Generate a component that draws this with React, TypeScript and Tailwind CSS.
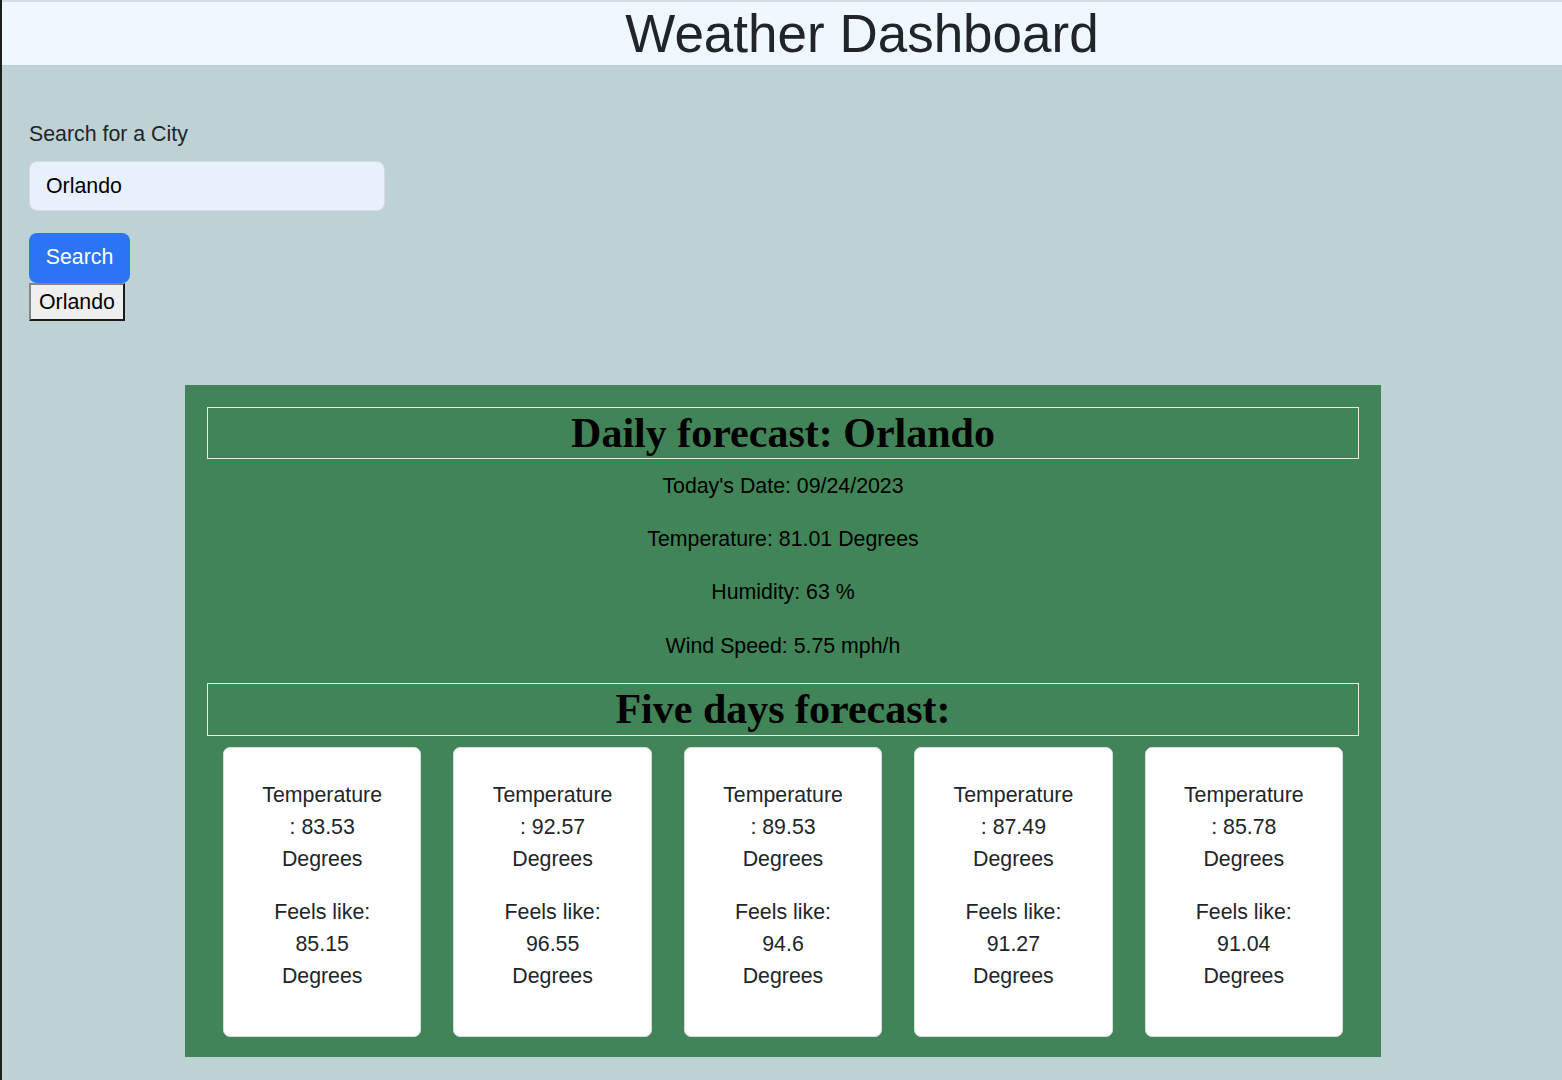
const days = [
  { temp: "83.53", feels: "85.15" },
  { temp: "92.57", feels: "96.55" },
  { temp: "89.53", feels: "94.6" },
  { temp: "87.49", feels: "91.27" },
  { temp: "85.78", feels: "91.04" },
];

const sans = "font-['Liberation_Sans',Arial,sans-serif]";

function DayCard({ temp, feels }: { temp: string; feels: string }) {
  return (
    <div className="px-4">
      <div className="rounded-[7px] border border-[#d9dcdf] bg-white pt-[31px] pb-[44px] text-center text-[21.33px] leading-[32px] text-[#212529]">
        <p className="mb-[21.33px]">
          <span className="block">Temperature</span>
          <span className="block">: {temp}</span>
          <span className="block">Degrees</span>
        </p>
        <p>
          <span className="block">Feels like:</span>
          <span className="block">{feels}</span>
          <span className="block">Degrees</span>
        </p>
      </div>
    </div>
  );
}

export default function App() {
  return (
    <div className={`min-h-[1080px] border-l-2 border-[#1d1e1e] bg-[#bed2d5] ${sans}`}>
      <header className="border-t-2 border-[#d6dce1] bg-[#f0f8ff] pl-[160px] text-center">
        <h1 className="text-[53px] leading-[63px] text-[#212529]">Weather Dashboard</h1>
      </header>

      <div className="px-[27px] pt-[53px]">
        <label className="mb-[11px] block text-[21.33px] leading-[32px] text-[#212529]">
          Search for a City
        </label>
        <input
          defaultValue="Orlando"
          className="block h-[50px] w-[356px] rounded-[8px] border border-[#d5dbe0] bg-[#e8f0fe] px-4 text-[21.33px] text-black outline-none"
        />
        <button className="mt-[22px] block h-[50px] w-[101px] rounded-[8px] bg-[#2b74f4] text-[21.33px] text-white">
          Search
        </button>
        <button className="block h-[38px] border-2 border-t-[#858585] border-l-[#858585] border-r-[#1a1a1a] border-b-[#1a1a1a] bg-[#efefef] px-[8px] text-[21.33px] leading-[24px] text-black">
          Orlando
        </button>
      </div>

      <div className="ml-[183px] mt-[64px] w-[1196px] bg-[#418458] px-[22px] pt-[22px] pb-[20px]">
        <h2 className="mb-[10.67px] border border-[#e6ece8] text-center font-['Liberation_Serif',serif] text-[42px] font-bold leading-[50px] text-black">
          Daily forecast: Orlando
        </h2>
        <div className="text-center text-[21.33px] leading-[32px] text-black">
          <p className="mb-[21.33px]">Today's Date: 09/24/2023</p>
          <p className="mb-[21.33px]">Temperature: 81.01 Degrees</p>
          <p className="mb-[21.33px]">Humidity: 63 %</p>
          <p className="mb-[21.33px]">Wind Speed: 5.75 mph/h</p>
        </div>
        <h2 className="mb-[10.67px] border border-[#e6ece8] text-center font-['Liberation_Serif',serif] text-[42px] font-bold leading-[51px] text-black">
          Five days forecast:
        </h2>
        <div className="grid grid-cols-5">
          {days.map((d) => (
            <DayCard key={d.temp} temp={d.temp} feels={d.feels} />
          ))}
        </div>
      </div>
    </div>
  );
}
